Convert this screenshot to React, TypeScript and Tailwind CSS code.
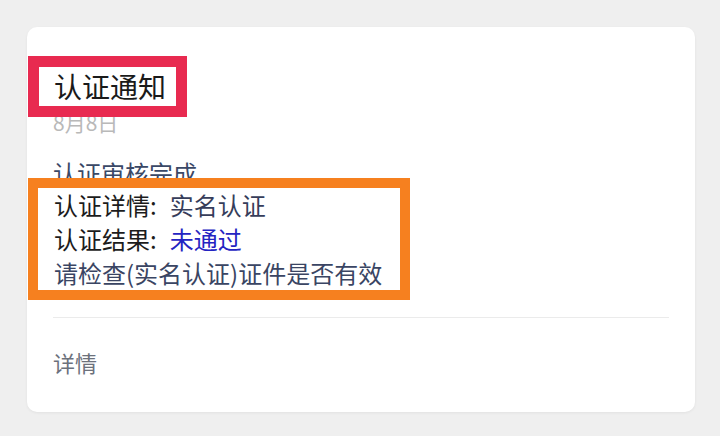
const cjk = { fontFamily: '"Noto Sans CJK SC", "Noto Sans", sans-serif' };

function NoticeCard() {
  return (
    <div className="w-[668px] rounded-[10px] bg-white px-[26px] pt-[29px] pb-[35px] shadow-[0_1px_3px_rgba(0,0,0,0.06)]">
      {/* Title with red highlight frame */}
      <div className="relative z-10 -ml-[25px] w-fit border-[11px] border-[#e82a50] bg-white pl-[15px] pr-[10px]">
        <h2 className="text-[28px] leading-[39px] text-[#1a1a1a]">认证通知</h2>
      </div>
      <p className="-mt-[9px] text-[21px] leading-[28px] text-[#b9b9b9]">8月8日</p>

      <p className="mt-[20px] text-[24px] leading-[34px] text-[#3a4866]">认证审核完成</p>

      {/* Details with orange highlight frame */}
      <div className="relative z-10 -mt-[12px] -ml-[25px] w-[382px] border-[10px] border-[#f6801f] bg-white pl-[16px] text-[24px] leading-[34px]">
        <p className="text-[#1c1c1c]">
          认证详情:<span className="ml-[13px] text-[#363d5a]">实名认证</span>
        </p>
        <p className="text-[#1c1c1c]">
          认证结果:<span className="ml-[13px] text-[#2424c2]">未通过</span>
        </p>
        <p className="text-[#3a4563]">请检查(实名认证)证件是否有效</p>
      </div>

      <div className="mt-[17px] h-px bg-[#ebebeb]" />

      <p className="mt-[29px] text-[22px] leading-[30px] text-[#6c717c]">详情</p>
    </div>
  );
}

export default function App() {
  return (
    <div className="h-[436px] w-[720px] bg-[#efefef] pt-[27px] pl-[27px]" style={cjk}>
      <NoticeCard />
    </div>
  );
}
